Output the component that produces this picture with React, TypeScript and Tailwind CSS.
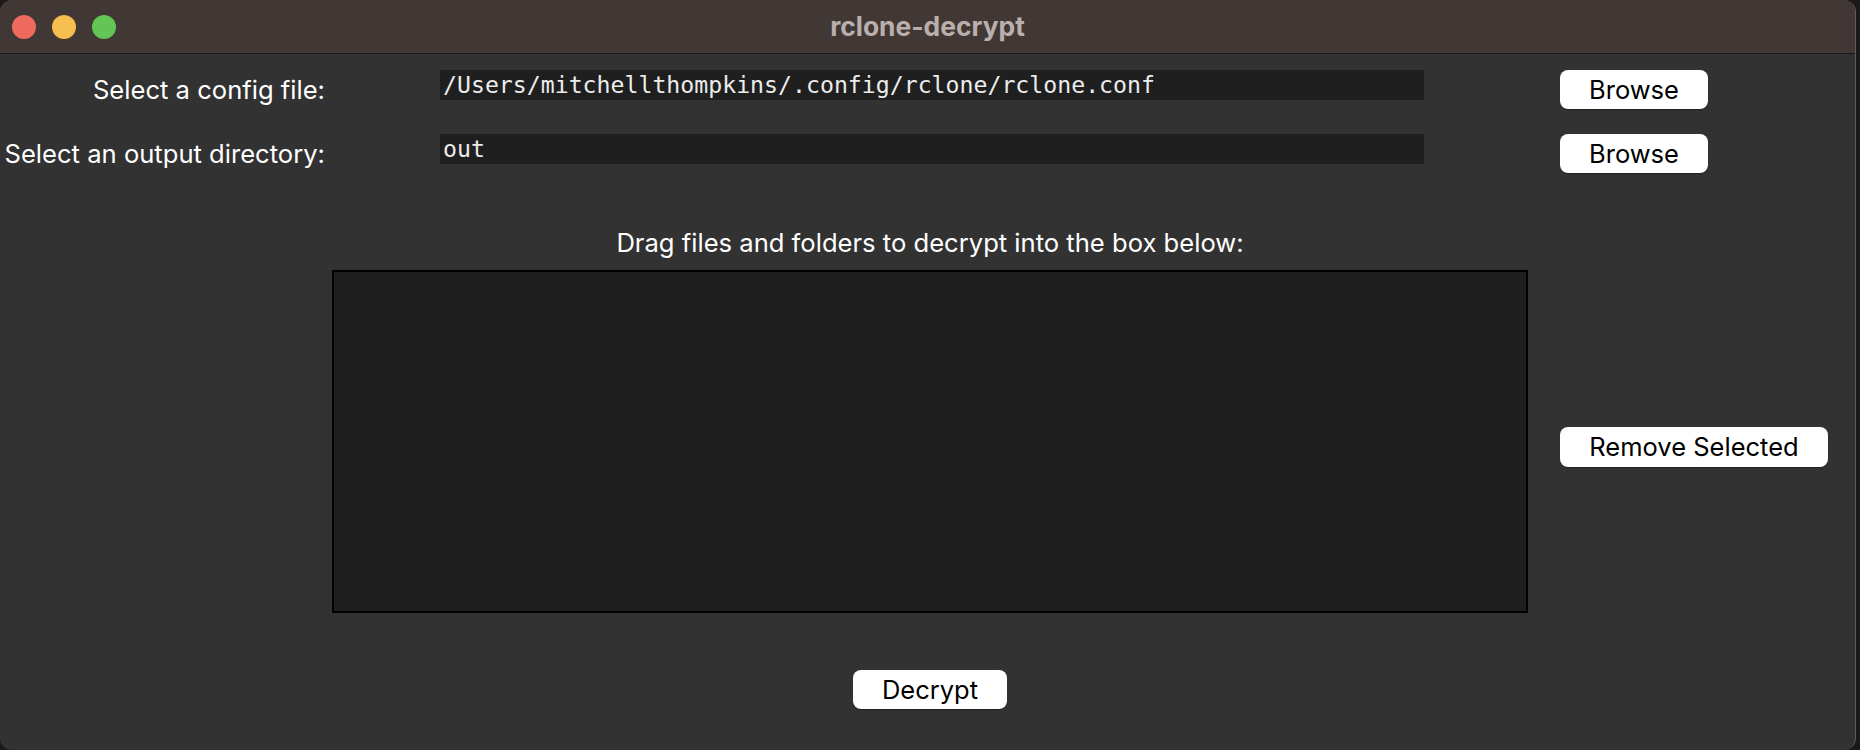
const ui = { fontFamily: 'Inter, "Noto Sans", sans-serif' };
const mono = { fontFamily: '"DejaVu Sans Mono", "Liberation Mono", monospace' };

const Btn = ({ label, w }: { label: string; w: string }) => (
    <button
        className={`${w} h-[39px] shrink-0 bg-white rounded-[8px] text-black text-[25.5px] leading-none shadow-[0_1px_1px_rgba(0,0,0,0.35)]`}
        style={ui}
    >
        {label}
    </button>
);

const Row = ({ label, value }: { label: string; value: string }) => (
    <div className="flex items-start">
        <div className="w-[325px] shrink-0 text-right text-white text-[25.6px] leading-[39px] whitespace-nowrap" style={ui}>
            {label}
        </div>
        <div
            className="ml-[115px] w-[984px] h-[30px] shrink-0 bg-[#1f1f1f] text-[#ececec] text-[23.2px] leading-[30px] pl-[3px] whitespace-nowrap overflow-hidden"
            style={mono}
        >
            {value}
        </div>
        <div className="ml-[136px]">
            <Btn label="Browse" w="w-[148px]" />
        </div>
    </div>
);

const App = () => {
    return (
        <div className="w-[1860px] h-[750px] bg-[#1b1817] overflow-hidden">
            <div className="w-[1856px] h-[750px] rounded-[12px] overflow-hidden bg-[#323232] border-r border-[#5c5c5c] flex flex-col">
                {/* title bar */}
                <div className="h-[54px] shrink-0 bg-[#413836] border-b border-[#1a1a1a] flex items-center relative">
                    <div className="flex gap-[16px] pl-[12px]">
                        <div className="w-[24px] h-[24px] rounded-full bg-[#ee6a5f]" />
                        <div className="w-[24px] h-[24px] rounded-full bg-[#f5be4f]" />
                        <div className="w-[24px] h-[24px] rounded-full bg-[#62c554]" />
                    </div>
                    <div
                        className="absolute left-0 right-0 text-center text-[26.4px] font-bold text-[#b9b0ad]"
                        style={ui}
                    >
                        rclone-decrypt
                    </div>
                </div>

                <div className="flex flex-col pt-[16px]">
                    <div className="flex flex-col gap-[25px]">
                        <Row label="Select a config file:" value="/Users/mitchellthompkins/.config/rclone/rclone.conf" />
                        <Row label="Select an output directory:" value="out" />
                    </div>

                    <div className="flex items-center mt-[55px] ml-[332px]">
                        <div className="w-[1196px] flex flex-col items-center">
                            <div className="text-white text-[25.6px] leading-[30px] whitespace-nowrap" style={ui}>
                                Drag files and folders to decrypt into the box below:
                            </div>
                            <div className="mt-[12px] w-[1196px] h-[343px] bg-[#1f1f1f] border-2 border-black" />
                            <div className="mt-[57px]">
                                <Btn label="Decrypt" w="w-[154px]" />
                            </div>
                        </div>
                        <div className="ml-[32px] mt-[-44px]">
                            <Btn label="Remove Selected" w="w-[268px] h-[40px]" />
                        </div>
                    </div>
                </div>
            </div>
        </div>
    );
};

export default App;
